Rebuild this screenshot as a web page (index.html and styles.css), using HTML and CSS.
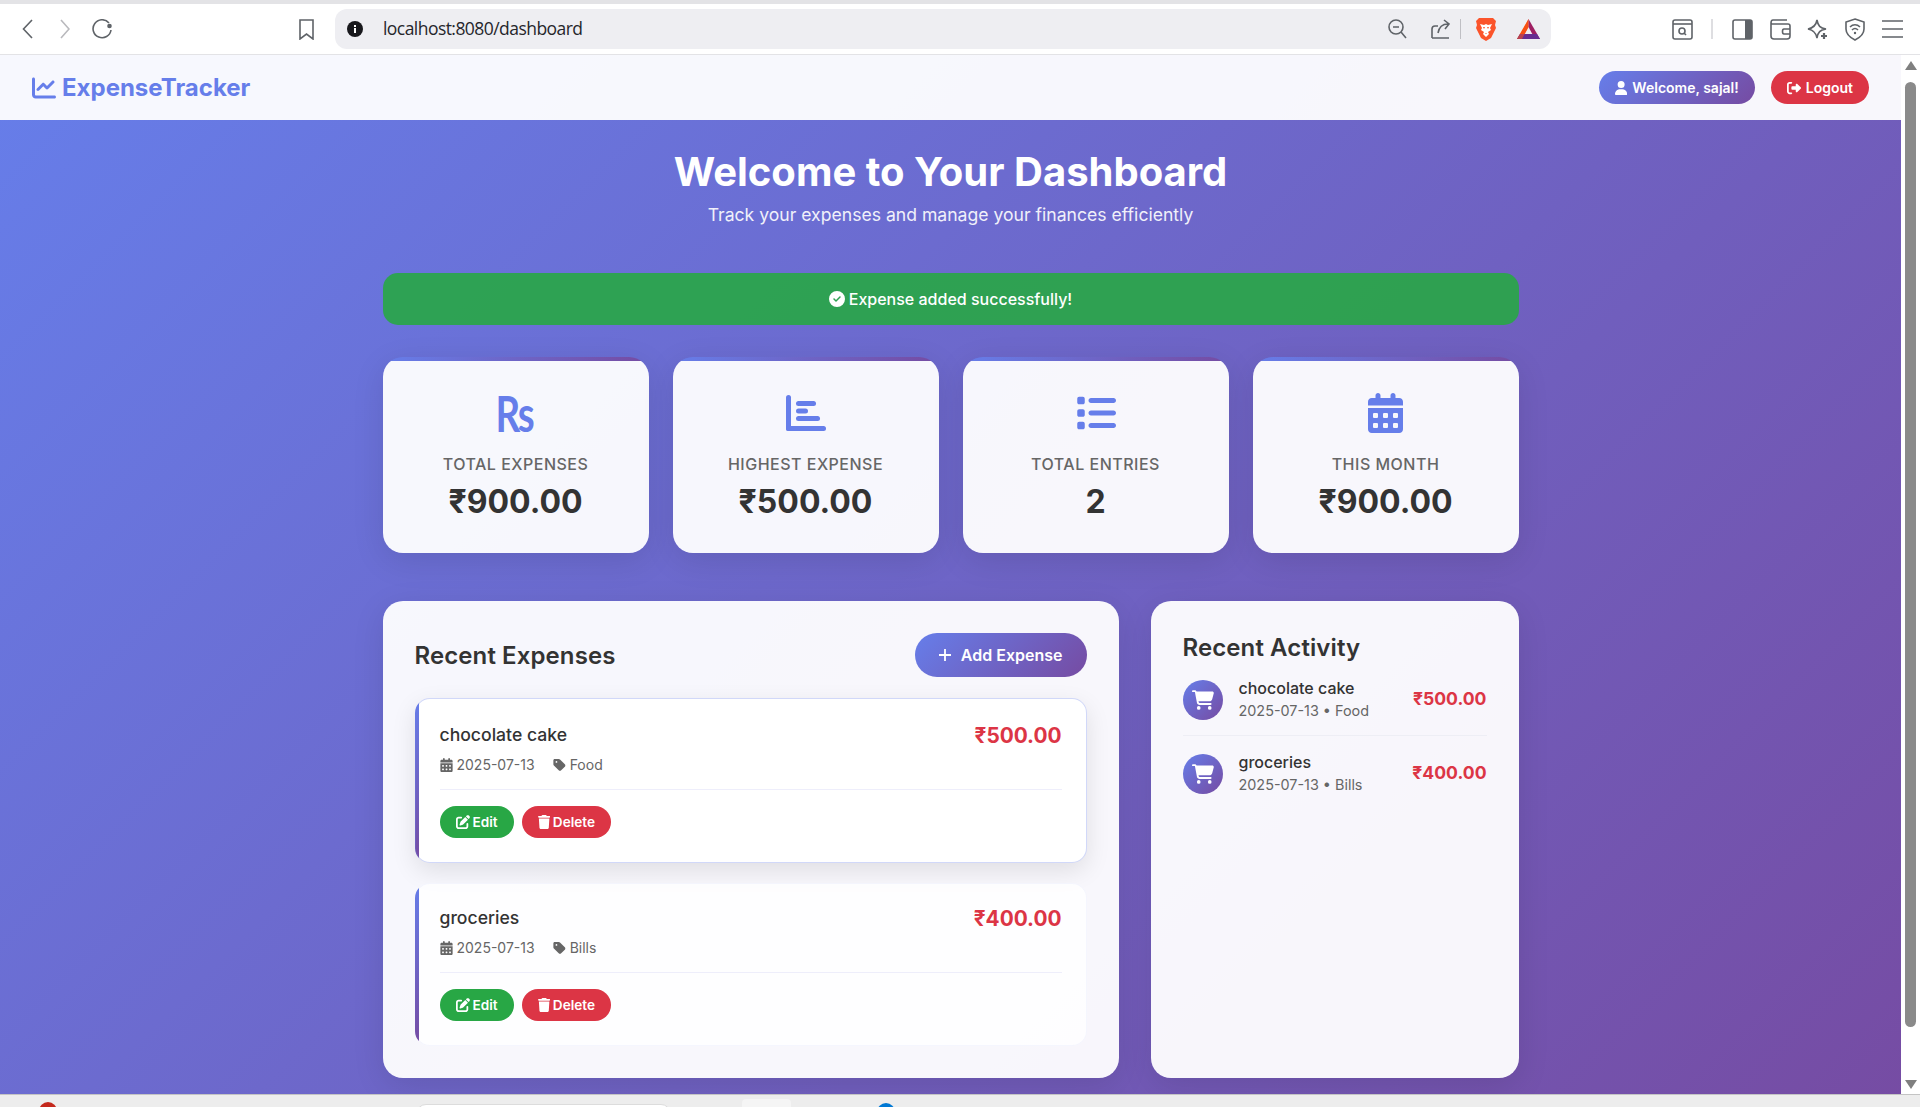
FILE: index.html
```html
<!DOCTYPE html>
<html>
<head>
	<title>Expense Tracker - Dashboard</title>
	<link rel="stylesheet" href="styles.css">
</head>
<body>
	<svg class="sprites" xmlns="http://www.w3.org/2000/svg">
		<symbol id="i-line" viewBox="0 0 512 512"><path d="M64 64c0-17.700-14.300-32-32-32S0 46.300 0 64V400c0 44.200 35.800 80 80 80H480c17.700 0 32-14.300 32-32s-14.300-32-32-32H80c-8.800 0-16-7.200-16-16V64zm406.600 86.600c12.500-12.500 12.500-32.800 0-45.300s-32.800-12.500-45.300 0L320 210.700l-57.400-57.400c-12.500-12.500-32.800-12.500-45.300 0l-112 112c-12.500 12.500-12.500 32.800 0 45.300s32.800 12.500 45.300 0L240 221.300l57.400 57.400c12.500 12.500 32.800 12.500 45.300 0l128-128z"/></symbol>
		<symbol id="i-user" viewBox="0 0 448 512"><path d="M224 256A128 128 0 1 0 224 0a128 128 0 1 0 0 256zm-45.700 48C79.800 304 0 383.800 0 482.300C0 498.700 13.300 512 29.700 512H418.300c16.400 0 29.700-13.300 29.700-29.700C448 383.800 368.200 304 269.700 304H178.300z"/></symbol>
		<symbol id="i-out" viewBox="0 0 512 512"><path d="M377.900 105.900L500.700 228.700c7.200 7.200 11.300 17.100 11.300 27.300s-4.100 20.100-11.300 27.300L377.900 406.100c-6.400 6.400-15 9.900-24 9.900c-18.700 0-33.900-15.200-33.900-33.900l0-62.100-128 0c-17.700 0-32-14.300-32-32l0-64c0-17.700 14.300-32 32-32l128 0 0-62.100c0-18.700 15.200-33.900 33.900-33.900c9 0 17.600 3.600 24 9.900zM160 96L96 96c-17.700 0-32 14.300-32 32l0 256c0 17.700 14.300 32 32 32l64 0c17.700 0 32 14.300 32 32s-14.300 32-32 32l-64 0c-53 0-96-43-96-96L0 128C0 75 43 32 96 32l64 0c17.700 0 32 14.300 32 32s-14.300 32-32 32z"/></symbol>
		<symbol id="i-check" viewBox="0 0 512 512"><path d="M256 512A256 256 0 1 0 256 0a256 256 0 1 0 0 512zM369 209L241 337c-9.400 9.400-24.600 9.400-33.900 0l-64-64c-9.400-9.400-9.400-24.600 0-33.900s24.600-9.400 33.900 0l47 47L335 175c9.400-9.400 24.600-9.400 33.900 0s9.400 24.600 0 33.900z"/></symbol>
		<symbol id="i-edit" viewBox="0 0 512 512"><path d="M471.600 21.700c-21.900-21.900-57.300-21.900-79.200 0L362.300 51.700l97.900 97.900 30.100-30.100c21.900-21.900 21.900-57.300 0-79.200L471.600 21.700zm-299.200 220c-6.100 6.100-10.800 13.600-13.500 21.900l-29.600 88.800c-2.900 8.600-.6 18.100 5.800 24.600s15.900 8.700 24.600 5.800l88.800-29.600c8.200-2.700 15.700-7.400 21.900-13.500L437.700 172.300 339.700 74.300 172.400 241.700zM96 64C43 64 0 107 0 160V416c0 53 43 96 96 96H352c53 0 96-43 96-96V320c0-17.700-14.300-32-32-32s-32 14.300-32 32v96c0 17.700-14.300 32-32 32H96c-17.700 0-32-14.300-32-32V160c0-17.700 14.300-32 32-32h96c17.700 0 32-14.300 32-32s-14.300-32-32-32H96z"/></symbol>
		<symbol id="i-trash" viewBox="0 0 448 512"><path d="M135.200 17.700L128 32H32C14.300 32 0 46.300 0 64S14.300 96 32 96H416c17.700 0 32-14.300 32-32s-14.300-32-32-32H320l-7.200-14.300C307.400 6.800 296.300 0 284.200 0H163.800c-12.100 0-23.200 6.800-28.600 17.700zM416 128H32L53.200 467c1.600 25.300 22.600 45 47.900 45H346.900c25.300 0 46.300-19.700 47.900-45L416 128z"/></symbol>
		<symbol id="i-tag" viewBox="0 0 448 512"><path d="M0 80V229.500c0 17 6.700 33.300 18.700 45.300l176 176c25 25 65.500 25 90.500 0L418.700 317.300c25-25 25-65.500 0-90.500l-176-176c-12-12-28.300-18.700-45.300-18.700H48C21.500 32 0 53.500 0 80zm112 32a32 32 0 1 1 0 64 32 32 0 1 1 0-64z"/></symbol>
		<symbol id="i-cart" viewBox="0 0 576 512"><path d="M0 24C0 10.700 10.700 0 24 0H69.500c22 0 41.500 12.800 50.600 32h411c26.300 0 45.500 25 38.600 50.400l-41 152.300c-8.500 31.400-37 53.300-69.500 53.300H170.700l5.400 28.500c2.200 11.300 12.100 19.500 23.600 19.500H488c13.300 0 24 10.700 24 24s-10.700 24-24 24H199.700c-34.600 0-64.300-24.600-70.700-58.500L77.400 54.500c-.7-3.800-4-6.500-7.900-6.500H24C10.700 48 0 37.300 0 24zM128 464a48 48 0 1 1 96 0 48 48 0 1 1 -96 0zm336-48a48 48 0 1 1 0 96 48 48 0 1 1 0-96z"/></symbol>
		<symbol id="i-cal" viewBox="0 0 448 512"><path d="M128 0c17.700 0 32 14.300 32 32V64H288V32c0-17.700 14.300-32 32-32s32 14.300 32 32V64h48c26.500 0 48 21.500 48 48v48H0V112C0 85.500 21.500 64 48 64H96V32c0-17.700 14.300-32 32-32zM0 192H448V464c0 26.500-21.500 48-48 48H48c-26.500 0-48-21.500-48-48V192zm64 80v32c0 8.800 7.200 16 16 16h32c8.800 0 16-7.200 16-16V272c0-8.800-7.200-16-16-16H80c-8.800 0-16 7.200-16 16zm128 0v32c0 8.800 7.200 16 16 16h32c8.800 0 16-7.200 16-16V272c0-8.800-7.200-16-16-16H208c-8.800 0-16 7.200-16 16zm144-16c-8.800 0-16 7.200-16 16v32c0 8.800 7.200 16 16 16h32c8.800 0 16-7.200 16-16V272c0-8.800-7.200-16-16-16H336zM64 400v32c0 8.800 7.200 16 16 16h32c8.800 0 16-7.200 16-16V400c0-8.800-7.200-16-16-16H80c-8.800 0-16 7.200-16 16zm144-16c-8.800 0-16 7.200-16 16v32c0 8.800 7.200 16 16 16h32c8.800 0 16-7.200 16-16V400c0-8.800-7.200-16-16-16H208zm112 16v32c0 8.800 7.200 16 16 16h32c8.800 0 16-7.200 16-16V400c0-8.800-7.200-16-16-16H336c-8.800 0-16 7.200-16 16z"/></symbol>
		<symbol id="i-list" viewBox="0 0 512 512"><path d="M40 48C26.700 48 16 58.700 16 72v48c0 13.300 10.700 24 24 24H88c13.300 0 24-10.700 24-24V72c0-13.300-10.700-24-24-24H40zM192 64c-17.700 0-32 14.300-32 32s14.300 32 32 32H480c17.700 0 32-14.300 32-32s-14.300-32-32-32H192zm0 160c-17.700 0-32 14.300-32 32s14.300 32 32 32H480c17.700 0 32-14.300 32-32s-14.300-32-32-32H192zm0 160c-17.700 0-32 14.300-32 32s14.300 32 32 32H480c17.700 0 32-14.300 32-32s-14.300-32-32-32H192zM16 232v48c0 13.300 10.700 24 24 24H88c13.300 0 24-10.700 24-24V232c0-13.300-10.700-24-24-24H40c-13.300 0-24 10.700-24 24zM40 368c-13.300 0-24 10.700-24 24v48c0 13.300 10.700 24 24 24H88c13.300 0 24-10.700 24-24V392c0-13.300-10.700-24-24-24H40z"/></symbol>
	</svg>

	<div class="top-strip"></div>

	<header class="toolbar">
		<svg class="t-icon back" viewBox="0 0 11 20"><path d="M10 1 1.500 10 10 19"/></svg>
		<svg class="t-icon forward" viewBox="0 0 10 20"><path d="M1 1 9 10 1 19"/></svg>
		<svg class="t-icon reload" viewBox="0 0 21 20"><path d="M17 4A9 9 0 1 0 19 11"/><circle class="solid" cx="17.500" cy="7" r="2.300"/></svg>
		<svg class="t-icon bookmark" viewBox="0 0 15 21"><path d="M1 1H14V20L7.500 15 1 20Z"/></svg>
		<div class="address">
			<svg class="info" viewBox="0 0 16 16"><circle cx="8" cy="8" r="8" fill="#18181c"/><rect x="7" y="7" width="2" height="5" fill="#fff"/><rect x="7" y="4" width="2" height="2" fill="#fff"/></svg>
			<span class="url">localhost:8080/dashboard</span>
			<svg class="t-icon zoom-out" viewBox="0 0 19 20"><circle cx="8" cy="8" r="7"/><path d="M5 8H11M13 13 18 19"/></svg>
			<svg class="t-icon share" viewBox="0 0 19 20"><path d="M1 19V10C1 8 2 7 4 7H7M1 19H18M7 14C8 8 11 5 17 5M13 1 18 5 14 10"/></svg>
			<span class="addr-sep"></span>
			<svg class="brave" viewBox="0 0 22 24"><path fill="#fb542b" d="M4 1H18L21 4 20 8 21 11 16 21 11 24 6 21 1 11 2 8 1 4Z"/><path fill="#fff" d="M5 7 9 8 11 7 13 8 17 7 15 11 16 13 13 15 14 17 11 20 8 17 9 15 6 13 7 11Z"/><path fill="#fb542b" d="M8 10H10L9 12ZM14 10H12L13 12ZM10 16H12L11 17Z"/></svg>
			<svg class="bat" viewBox="0 0 23 20"><path fill="#ff5000" d="M11.500 0 0 20H5L11.500 8Z"/><path fill="#9e1f63" d="M11.500 0 23 20H18L11.500 8Z"/><path fill="#662d91" d="M0 20H23L20 15H3Z"/><path fill="#f04e23" d="M6 11 11.500 0V8L5 20H0Z" opacity=".6"/></svg>
		</div>
		<svg class="t-icon reader" viewBox="0 0 21 21"><rect x="1" y="1" width="19" height="19" rx="2"/><path d="M1 5H20"/><circle cx="10" cy="12" r="3"/><path d="M12 14 14 16"/></svg>
		<span class="tool-sep"></span>
		<svg class="t-icon sidebar" viewBox="0 0 21 21"><rect x="1" y="1" width="19" height="19" rx="2"/><rect class="solid" x="13" y="1" width="7" height="19"/></svg>
		<svg class="t-icon wallet" viewBox="0 0 21 21"><path d="M3 1H17M1 4C1 2 2 1 3 1M1 4V17C1 19 2 20 4 20H17C19 20 20 19 20 17V7C20 6 19 5 18 5H3C2 5 1 5 1 4ZM20 10H14C12 10 12 15 14 15H20"/></svg>
		<svg class="t-icon stars" viewBox="0 0 22 23"><path d="M10 2C11 8 13 10 19 11 13 12 11 14 10 20 9 14 6 12 1 11 6 10 9 8 10 2Z"/><path class="heavy" d="M17 15V21M14 18H20"/></svg>
		<svg class="t-icon shield" viewBox="0 0 20 23"><path d="M10 1 19 4V11C19 17 14 20 10 22 6 20 1 17 1 11V4Z"/><path d="M5 9C8 6 12 6 15 9M7 12C9 10 11 10 13 12"/><circle class="solid" cx="10" cy="15" r="1.200"/></svg>
		<svg class="t-icon menu" viewBox="0 0 21 20"><path d="M0 2H21M0 10H21M0 18H21"/></svg>
	</header>

	<div class="viewport">
		<div class="page">
			<nav class="navbar">
				<a class="brand"><svg class="brand-icon"><use href="#i-line"/></svg>ExpenseTracker</a>
				<div class="nav-actions">
					<span class="pill pill-user"><svg class="pill-icon user-icon"><use href="#i-user"/></svg>Welcome, sajal!</span>
					<a class="pill pill-logout"><svg class="pill-icon"><use href="#i-out"/></svg>Logout</a>
				</div>
			</nav>

			<main class="container">
				<div class="hero">
					<h1>Welcome to Your Dashboard</h1>
					<p>Track your expenses and manage your finances efficiently</p>
				</div>

				<div class="alert"><svg class="alert-icon"><use href="#i-check"/></svg>Expense added successfully!</div>

				<section class="stats">
					<div class="stat">
						<div class="stat-icon"><span class="rs">Rs</span></div>
						<div class="stat-label">Total Expenses</div>
						<div class="stat-value">₹900.00</div>
					</div>
					<div class="stat">
						<div class="stat-icon">
							<svg class="icon-bars" viewBox="0 0 40 36"><rect width="5" height="36" rx="2.500"/><rect y="31" width="40" height="5" rx="2.500"/><rect x="10" y="6" width="20" height="5" rx="2.500"/><rect x="10" y="13.500" width="12" height="5" rx="2.500"/><rect x="10" y="21" width="24" height="5" rx="2.500"/></svg>
						</div>
						<div class="stat-label">Highest Expense</div>
						<div class="stat-value">₹500.00</div>
					</div>
					<div class="stat">
						<div class="stat-icon"><svg class="icon-list"><use href="#i-list"/></svg></div>
						<div class="stat-label">Total Entries</div>
						<div class="stat-value">2</div>
					</div>
					<div class="stat">
						<div class="stat-icon"><svg class="icon-cal"><use href="#i-cal"/></svg></div>
						<div class="stat-label">This Month</div>
						<div class="stat-value">₹900.00</div>
					</div>
				</section>

				<section class="columns">
					<div class="panel">
						<div class="panel-head">
							<h2>Recent Expenses</h2>
							<a class="add-btn"><svg class="plus" viewBox="0 0 12 12"><path d="M6 0V12M0 6H12"/></svg>Add Expense</a>
						</div>

						<article class="expense expense-hover">
							<div class="expense-top">
								<h3>chocolate cake</h3>
								<span class="expense-amount">₹500.00</span>
							</div>
							<div class="expense-meta">
								<span><svg class="meta-icon"><use href="#i-cal"/></svg>2025-07-13</span>
								<span><svg class="meta-icon"><use href="#i-tag"/></svg>Food</span>
							</div>
							<div class="expense-actions">
								<a class="mini mini-edit"><svg class="mini-icon"><use href="#i-edit"/></svg>Edit</a>
								<a class="mini mini-delete"><svg class="mini-icon trash"><use href="#i-trash"/></svg>Delete</a>
							</div>
						</article>

						<article class="expense">
							<div class="expense-top">
								<h3>groceries</h3>
								<span class="expense-amount">₹400.00</span>
							</div>
							<div class="expense-meta">
								<span><svg class="meta-icon"><use href="#i-cal"/></svg>2025-07-13</span>
								<span><svg class="meta-icon"><use href="#i-tag"/></svg>Bills</span>
							</div>
							<div class="expense-actions">
								<a class="mini mini-edit"><svg class="mini-icon"><use href="#i-edit"/></svg>Edit</a>
								<a class="mini mini-delete"><svg class="mini-icon trash"><use href="#i-trash"/></svg>Delete</a>
							</div>
						</article>
					</div>

					<aside class="panel">
						<h2>Recent Activity</h2>
						<div class="activity">
							<span class="activity-icon"><svg class="cart"><use href="#i-cart"/></svg></span>
							<div class="activity-text">
								<div class="activity-name">chocolate cake</div>
								<div class="activity-meta">2025-07-13 • Food</div>
							</div>
							<span class="activity-amount">₹500.00</span>
						</div>
						<div class="activity">
							<span class="activity-icon"><svg class="cart"><use href="#i-cart"/></svg></span>
							<div class="activity-text">
								<div class="activity-name">groceries</div>
								<div class="activity-meta">2025-07-13 • Bills</div>
							</div>
							<span class="activity-amount">₹400.00</span>
						</div>
					</aside>
				</section>
			</main>
		</div>

		<div class="scrollbar">
			<span class="arrow arrow-up"></span>
			<span class="thumb"></span>
			<span class="arrow arrow-down"></span>
		</div>
	</div>

	<footer class="taskbar">
		<span class="task-dot task-red"></span>
		<span class="task-search"></span>
		<span class="task-tab"></span>
		<span class="task-dot task-blue"></span>
	</footer>
</body>
</html>
```

FILE: styles.css
```css
* {
	box-sizing: border-box;
}

html, body {
	height: 100%;
}

body {
	margin: 0;
	height: 1107px;
	overflow: hidden;
	display: flex;
	flex-direction: column;
	font-family: Inter, "Liberation Sans", sans-serif;
	color: #333;
	background-color: #ededed;
}

h1, h2, h3, p {
	margin: 0;
}

.sprites {
	display: none;
}

/* browser chrome */
.top-strip {
	height: 4px;
	background-color: #e3e3e6;
}

.toolbar {
	height: 51px;
	flex: none;
	display: flex;
	align-items: center;
	padding-left: 22px;
	background-color: #fff;
	border-bottom: 1px solid #e3e3e6;
}

.t-icon {
	flex: none;
	fill: none;
	stroke: #5f6368;
	stroke-width: 1.6;
}

.t-icon .solid {
	fill: #5f6368;
	stroke: none;
}

.t-icon .heavy {
	stroke-width: 2.200;
}

.back { width: 11px; height: 20px; }
.forward { width: 10px; height: 20px; margin-left: 27px; stroke: #b9b9bd; }
.reload { width: 21px; height: 20px; margin-left: 22px; }
.bookmark { width: 15px; height: 21px; margin-left: 186px; }

.address {
	width: 1216px;
	height: 40px;
	flex: none;
	margin-left: 21px;
	padding: 0 11px 0 12px;
	display: flex;
	align-items: center;
	border-radius: 12px;
	background-color: #eeeef2;
}

.info { width: 16px; height: 16px; flex: none; }

.url {
	margin-left: 20px;
	padding-bottom: 2px;
	font-family: "Open Sans", sans-serif;
	font-size: 17.500px;
	letter-spacing: -0.55px;
	color: #26262b;
}

.zoom-out { width: 19px; height: 20px; margin-left: auto; }
.share { width: 19px; height: 20px; margin-left: 24px; }

.addr-sep {
	width: 1px;
	height: 20px;
	margin-left: 10px;
	background-color: #bfbfc4;
}

.brave { width: 22px; height: 24px; margin-left: 14px; }
.bat { width: 23px; height: 20px; margin-left: 20px; }

.reader { width: 21px; height: 21px; margin-left: 121px; }

.tool-sep {
	width: 2px;
	height: 20px;
	margin-left: 18px;
	background-color: #dedee1;
}

.sidebar { width: 21px; height: 21px; margin-left: 19px; }
.wallet { width: 21px; height: 21px; margin-left: 17px; }
.stars { width: 22px; height: 23px; margin-left: 16px; }
.shield { width: 20px; height: 23px; margin-left: 16px; }
.menu { width: 21px; height: 20px; margin-left: 17px; }

.viewport {
	flex: 1;
	min-height: 0;
	display: flex;
}

.page {
	flex: 1;
	min-width: 0;
	overflow: hidden;
	background: linear-gradient(135deg, #667eea 0%, #764ba2 100%) no-repeat;
	background-size: 100% 1100px;
}

.scrollbar {
	width: 19px;
	flex: none;
	display: flex;
	flex-direction: column;
	align-items: center;
	background-color: #fff;
}

.thumb {
	width: 11px;
	height: 945px;
	margin-top: 12px;
	border-radius: 6px;
	background-color: #8a8a8a;
}

.arrow {
	width: 0;
	height: 0;
	border-left: 6px solid transparent;
	border-right: 6px solid transparent;
}

.arrow-up {
	margin-top: 6px;
	border-bottom: 9px solid #7f7f7f;
}

.arrow-down {
	margin-top: 53px;
	border-top: 9px solid #7f7f7f;
}

.taskbar {
	height: 13px;
	flex: none;
	display: flex;
	overflow: hidden;
	background-color: #ededed;
	border-top: 1px solid #c4c4c4;
}

.task-dot {
	width: 18px;
	height: 18px;
	border-radius: 50%;
}

.task-red {
	margin: 7px 0 0 39px;
	background-color: #c4281c;
}

.task-search {
	width: 255px;
	height: 20px;
	margin: 9px 0 0 359px;
	border: 1px solid #dcdcdc;
	border-radius: 10px;
	background-color: #fff;
}

.task-tab {
	width: 49px;
	height: 20px;
	margin: 4px 0 0 71px;
	border-radius: 4px;
	background-color: #f5f5f5;
}

.task-blue {
	margin: 8px 0 0 86px;
	background-color: #0078d4;
}

/* page */
.navbar {
	height: 65px;
	padding: 0 32px;
	display: flex;
	align-items: center;
	justify-content: space-between;
	background-color: rgba(255, 255, 255, 0.95);
}

.brand {
	display: flex;
	align-items: center;
	gap: 6px;
	font-size: 24px;
	font-weight: 700;
	color: #667eea;
}

.brand-icon {
	width: 24px;
	height: 24px;
	fill: #667eea;
}

.nav-actions {
	display: flex;
	gap: 16px;
}

.pill {
	height: 33px;
	padding: 0 16px;
	display: flex;
	align-items: center;
	gap: 5px;
	border-radius: 25px;
	font-size: 14px;
	font-weight: 600;
	color: #fff;
}

.pill-user {
	background: linear-gradient(135deg, #667eea, #764ba2);
}

.pill-logout {
	background-color: #dc3545;
}

.pill-icon {
	width: 14px;
	height: 14px;
	fill: #fff;
}

.user-icon {
	width: 12.250px;
}

.container {
	width: 1200px;
	margin: 0 auto;
	padding: 28px 32px 0;
}

.hero {
	text-align: center;
	color: #fff;
}

.hero h1 {
	font-size: 40px;
	font-weight: 700;
	line-height: 48px;
}

.hero p {
	margin-top: 8px;
	font-size: 17.600px;
	line-height: 21px;
	opacity: 0.9;
}

.alert {
	height: 52px;
	margin-top: 48px;
	display: flex;
	align-items: center;
	justify-content: center;
	gap: 4px;
	border-radius: 15px;
	font-size: 16px;
	font-weight: 500;
	color: #fff;
	background-color: rgba(40, 167, 69, 0.9);
}

.alert-icon {
	width: 16px;
	height: 16px;
	fill: #fff;
}

.stats {
	margin-top: 32px;
	display: grid;
	grid-template-columns: repeat(4, 1fr);
	gap: 24px;
}

.stat {
	height: 196px;
	padding-top: 32px;
	overflow: hidden;
	text-align: center;
	border-radius: 20px;
	background: linear-gradient(90deg, #667eea, #764ba2) no-repeat top / 100% 4px, rgba(255, 255, 255, 0.95);
	box-shadow: 0 8px 32px rgba(0, 0, 0, 0.1);
}

.stat-icon {
	height: 48px;
	display: flex;
	align-items: center;
	justify-content: center;
	color: #667eea;
	fill: #667eea;
}

.rs {
	margin-left: -4px;
	font-family: Lato, sans-serif;
	font-size: 50px;
	font-weight: 700;
	line-height: 1;
	letter-spacing: -3px;
	transform: scaleX(0.77);
}

.icon-bars { width: 40px; height: 36px; }
.icon-list { width: 40px; height: 40px; }
.icon-cal { width: 35px; height: 40px; }

.stat-label {
	margin-top: 18px;
	font-size: 16px;
	font-weight: 500;
	letter-spacing: 0.5px;
	line-height: 18px;
	text-transform: uppercase;
	color: #666;
}

.stat-value {
	margin-top: 9px;
	font-size: 32px;
	font-weight: 700;
	line-height: 39px;
	color: #333;
}

.columns {
	margin-top: 48px;
	display: grid;
	grid-template-columns: 2fr 1fr;
	gap: 32px;
}

.panel {
	height: 477px;
	padding: 32px;
	border-radius: 20px;
	background-color: rgba(255, 255, 255, 0.95);
	box-shadow: 0 8px 32px rgba(0, 0, 0, 0.1);
}

.panel h2 {
	font-size: 24px;
	font-weight: 600;
	letter-spacing: 0.1px;
	line-height: 29px;
	color: #333;
}

.panel-head {
	display: flex;
	align-items: center;
	justify-content: space-between;
	margin-bottom: 21px;
}

.add-btn {
	height: 44px;
	padding: 0 24px;
	display: flex;
	align-items: center;
	gap: 10px;
	border-radius: 25px;
	font-size: 16px;
	font-weight: 600;
	color: #fff;
	background: linear-gradient(135deg, #667eea, #764ba2);
}

.plus {
	width: 12px;
	height: 12px;
	fill: none;
	stroke: #fff;
	stroke-width: 1.800;
}

.expense {
	height: 163px;
	margin-bottom: 20px;
	padding: 22px 24px 0;
	border-radius: 15px;
	border: 1px solid rgba(102, 126, 234, 0.06);
	background: linear-gradient(180deg, #667eea, #764ba2) no-repeat left / 4px 100% border-box, rgba(255, 255, 255, 0.8);
}

.expense-hover {
	height: 165px;
	padding-top: 24px;
	margin-bottom: 20px;
	border-color: rgba(102, 126, 234, 0.3);
	background: linear-gradient(180deg, #667eea, #764ba2) no-repeat left / 4px 100% border-box, #fff;
	box-shadow: 0 8px 25px rgba(0, 0, 0, 0.1);
}

.expense-top {
	height: 24px;
	display: flex;
	justify-content: space-between;
	align-items: center;
}

.expense-top h3 {
	font-size: 17.600px;
	font-weight: 500;
	line-height: 22px;
	color: #333;
}

.expense-amount {
	margin-top: 2px;
	font-size: 20.800px;
	font-weight: 700;
	line-height: 24px;
	color: #dc3545;
}

.expense-meta {
	height: 34px;
	margin-top: 8px;
	padding-bottom: 15px;
	display: flex;
	align-items: center;
	gap: 18px;
	font-size: 14px;
	color: #666;
}

.expense-meta span {
	display: flex;
	align-items: center;
	gap: 4px;
}

.meta-icon {
	width: 13px;
	height: 14px;
	fill: #666;
}

.expense-actions {
	display: flex;
	gap: 8px;
	padding-top: 16px;
	border-top: 1px solid #eeeefb;
}

.mini {
	height: 32px;
	padding: 0 16px;
	display: flex;
	align-items: center;
	gap: 3px;
	border-radius: 20px;
	font-size: 13.600px;
	font-weight: 600;
	color: #fff;
}

.mini-edit { background-color: #28a745; }
.mini-delete { background-color: #dc3545; }

.mini-icon {
	width: 14px;
	height: 14px;
	fill: #fff;
}

.mini-icon.trash {
	width: 12.250px;
	height: 14px;
}

.activity {
	display: flex;
	align-items: center;
	gap: 16px;
	padding: 16px 0 14px;
	border-bottom: 1px solid #eeeef5;
}

.activity:last-child {
	border-bottom: none;
}

.activity-icon {
	width: 40px;
	height: 40px;
	flex: none;
	display: flex;
	align-items: center;
	justify-content: center;
	border-radius: 50%;
	background: linear-gradient(135deg, #667eea, #764ba2);
}

.cart {
	width: 22px;
	height: 20px;
	fill: #fff;
}

.activity-text {
	flex: 1;
}

.activity-name {
	font-size: 16px;
	font-weight: 500;
	line-height: 20px;
	color: #333;
}

.activity-meta {
	margin-top: 3px;
	font-size: 14.400px;
	line-height: 20px;
	color: #666;
}

.activity-amount {
	padding-bottom: 2px;
	font-size: 17.600px;
	font-weight: 700;
	color: #dc3545;
}
```
